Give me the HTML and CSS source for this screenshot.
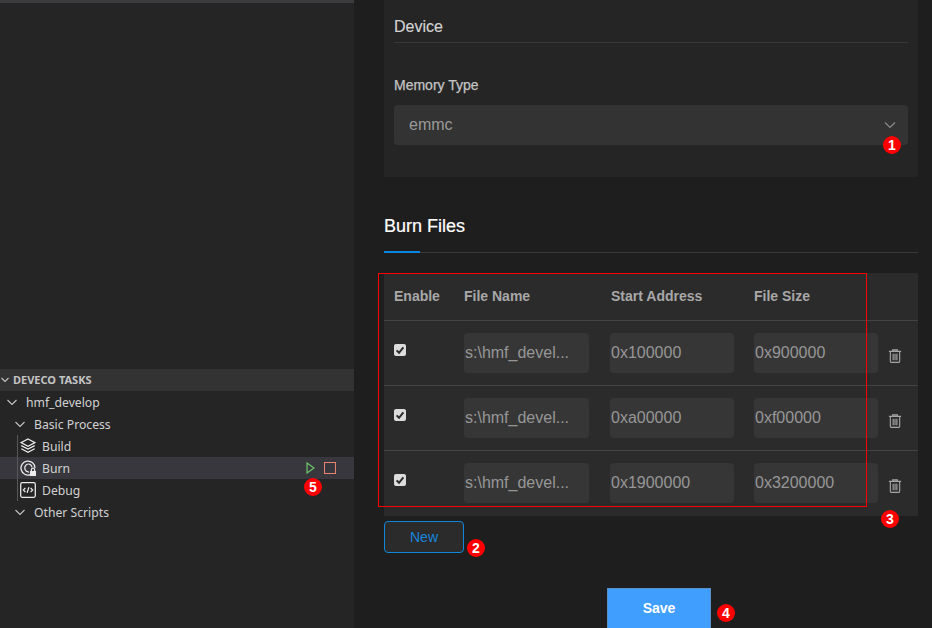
FILE: index.html
```html
<!DOCTYPE html>
<html lang="en">
<head>
<meta charset="utf-8">
<title>DevEco Burn</title>
<link rel="stylesheet" href="styles.css">
</head>
<body>
<div class="app">
  <aside class="sidebar">
    <div class="top-strip"></div>
    <div class="side-space"></div>
    <div class="tasks-head">
      <svg class="chev" viewBox="0 0 10 10"><path d="M1.5 3l3.5 3.5L8.5 3"/></svg>
      <span>DEVECO TASKS</span>
    </div>
    <div class="tree">
      <div class="row lvl1"><svg class="chev" viewBox="0 0 10 10"><path d="M.5 3L5 7.5 9.5 3"/></svg><span>hmf_develop</span></div>
      <div class="row lvl2"><svg class="chev" viewBox="0 0 10 10"><path d="M.5 3L5 7.5 9.5 3"/></svg><span>Basic Process</span></div>
      <div class="guide-group">
        <div class="row leaf">
          <svg class="ico" viewBox="0 0 16 16"><path d="M8 1L15 4.6 8 8.2 1 4.6z"/><path d="M1.3 7.6L8 11l6.7-3.4"/><path d="M1.3 10.8L8 14.4l6.7-3.6"/></svg><span>Build</span>
        </div>
        <div class="row leaf active">
          <svg class="ico" viewBox="0 0 16 16"><path d="M10.5 14.6A7 7 0 1 1 15 8"/><path d="M8.5 4a4 4 0 1 0 .6 8"/><path d="M8.5 4A4 4 0 0 1 12 7.2"/><rect class="solid" x="10" y="11" width="6" height="5"/><path d="M11.4 11V9.8a1.6 1.6 0 0 1 3.2 0V11"/></svg><span>Burn</span>
          <div class="row-actions">
            <svg class="play" viewBox="0 0 10 14"><path d="M1 1.2L9 7l-8 5.8z"/></svg>
            <span class="stop"></span>
          </div>
          <span class="badge b5">5</span>
        </div>
        <div class="row leaf">
          <svg class="ico" viewBox="0 0 16 16"><rect x=".7" y=".7" width="14.6" height="14.6" rx="1.5"/><path d="M5.4 5.8L3.4 8l2 2.2M10.6 5.8l2 2.2-2 2.2M8.9 5.2L7.1 10.8"/></svg><span>Debug</span>
        </div>
      </div>
      <div class="row lvl2"><svg class="chev" viewBox="0 0 10 10"><path d="M.5 3L5 7.5 9.5 3"/></svg><span>Other Scripts</span></div>
    </div>
  </aside>

  <main class="main">
    <section class="device-card">
      <h2 class="device-title">Device</h2>
      <label class="field-label">Memory Type</label>
      <div class="select">
        <span>emmc</span>
        <svg class="select-chev" viewBox="0 0 12 8"><path d="M1 1.5l5 5 5-5"/></svg>
        <span class="badge b1">1</span>
      </div>
    </section>

    <div class="tabs"><div class="tab">Burn Files</div></div>

    <section class="files">
      <div class="grid head">
        <div>Enable</div><div>File Name</div><div class="th-shift">Start Address</div><div>File Size</div><div></div>
      </div>
      <div class="grid line">
        <div><span class="check"><svg viewBox="0 0 12 12"><path d="M2.6 6.4l2.4 2.4 4.4-5.4"/></svg></span></div>
        <div class="cell">s:\hmf_devel...</div><div class="cell">0x100000</div><div class="cell">0x900000</div>
        <div class="trash-cell"><svg class="trash" viewBox="0 0 14 15"><path d="M.5 2.5h13M4.5 2.5V1h5v1.5M2 2.5v10.7c0 .6.4 1.1 1 1.1h8c.6 0 1-.5 1-1.1V2.5M5 5v7M7 5v7M9 5v7"/></svg></div>
      </div>
      <div class="grid line">
        <div><span class="check"><svg viewBox="0 0 12 12"><path d="M2.6 6.4l2.4 2.4 4.4-5.4"/></svg></span></div>
        <div class="cell">s:\hmf_devel...</div><div class="cell">0xa00000</div><div class="cell">0xf00000</div>
        <div class="trash-cell"><svg class="trash" viewBox="0 0 14 15"><path d="M.5 2.5h13M4.5 2.5V1h5v1.5M2 2.5v10.7c0 .6.4 1.1 1 1.1h8c.6 0 1-.5 1-1.1V2.5M5 5v7M7 5v7M9 5v7"/></svg></div>
      </div>
      <div class="grid line line-last">
        <div><span class="check"><svg viewBox="0 0 12 12"><path d="M2.6 6.4l2.4 2.4 4.4-5.4"/></svg></span></div>
        <div class="cell">s:\hmf_devel...</div><div class="cell">0x1900000</div><div class="cell">0x3200000</div>
        <div class="trash-cell"><svg class="trash" viewBox="0 0 14 15"><path d="M.5 2.5h13M4.5 2.5V1h5v1.5M2 2.5v10.7c0 .6.4 1.1 1 1.1h8c.6 0 1-.5 1-1.1V2.5M5 5v7M7 5v7M9 5v7"/></svg></div>
      </div>
      <div class="red-frame"></div>
      <span class="badge b3">3</span>
    </section>

    <div class="new-wrap">
      <button class="btn-new">New</button>
      <span class="badge b2">2</span>
    </div>
    <div class="save-wrap">
      <button class="btn-save">Save</button>
      <span class="badge b4">4</span>
    </div>
  </main>
</div>
</body>
</html>
```

FILE: styles.css
```css
* { box-sizing: border-box; }
html, body { margin: 0; height: 628px; overflow: hidden; background: #1e1e1e; }
.app { display: flex; height: 628px; font-family: "Liberation Sans", Arial, sans-serif; }

/* sidebar */
.sidebar { width: 354px; flex: none; background: #252526; display: flex; flex-direction: column; color: #d2d2d2; font-family: "Noto Sans", sans-serif; font-size: 12.2px; }
.top-strip { height: 3px; background: #3c3c3f; }
.side-space { height: 366px; }
.tasks-head { height: 22px; background: #333334; display: flex; align-items: center; font-size: 11px; font-weight: 700; }
.tasks-head .chev { width: 10px; height: 10px; margin-right: 3px; }
.tasks-head span { color: #c4c4c4; padding-bottom: 2px; }
.chev { width: 10px; height: 10px; flex: none; fill: none; stroke: #c5c5c5; stroke-width: 1.1; }
.row { height: 22px; display: flex; align-items: center; position: relative; }
.lvl1 { padding-left: 7px; gap: 9px; }
.lvl2 { padding-left: 15px; gap: 9px; }
.guide-group { border-left: 1px solid #585858; margin-left: 17px; }
.leaf { padding-left: 3px; gap: 6px; margin-left: -1px; }
.leaf.active { background: #37373d; margin-left: -18px; padding-left: 20px; }
.leaf.active::before { content: ""; position: absolute; left: 17px; top: 0; bottom: 0; width: 1px; background: #585858; }
.ico { width: 16px; height: 16px; flex: none; fill: none; stroke: #ececec; stroke-width: 1.25; }
.ico .solid { fill: #ececec; stroke: none; }
.row-actions { position: absolute; left: 306px; top: 5px; display: flex; gap: 9px; align-items: center; }
.play { width: 9px; height: 12px; fill: none; stroke: #6cbf6c; stroke-width: 1.5; }
.stop { width: 12px; height: 12px; border: 1px solid #e8836f; display: block; }

/* main */
.main { flex: 1; padding-left: 30px; padding-right: 14px; position: relative; }
.device-card { height: 177px; background: #252525; padding: 0 10px; }
.device-title { margin: 0; height: 43px; line-height: 53px; font-size: 16px; font-weight: 400; color: #d4d4d4; border-bottom: 1px solid #383838; -webkit-text-stroke: 0.15px #d4d4d4; }
.field-label { display: block; margin-top: 33px; height: 18px; line-height: 18px; font-size: 14px; color: #c4c4c4; -webkit-text-stroke: 0.25px #c4c4c4; }
.select { margin-top: 11px; height: 40px; background: #333333; border-radius: 4px; display: flex; align-items: center; justify-content: space-between; padding: 0 12px 0 15px; font-size: 16px; color: #9a9a9a; position: relative; }
.select-chev { width: 12px; height: 8px; fill: none; stroke: #8a8a8a; stroke-width: 1.2; }

.tabs { margin-top: 33px; height: 43px; border-bottom: 1px solid #3a3a3a; }
.tab { width: 81px; height: 43px; font-size: 18px; line-height: 32px; color: #ffffff; position: relative; white-space: nowrap; -webkit-text-stroke: 0.2px #ffffff; }
.tab::after { content: ""; position: absolute; left: 0; bottom: 0; width: 36px; height: 2px; background: #0a84e0; }

.files { margin-top: 20px; background: #2b2b2b; position: relative; height: 243px; }
.grid { display: grid; grid-template-columns: 70px 146px 144px 134px 1fr; padding-left: 10px; }
.head { height: 48px; padding-bottom: 2px; align-items: center; font-size: 14px; font-weight: 700; color: #a8a8a8; border-bottom: 1px solid #444444; }
.th-shift { padding-left: 1px; }
.line { height: 65px; align-items: center; border-bottom: 1px solid #444444; }
.line-last { border-bottom: 1px solid transparent; }
.check { display: block; width: 12px; height: 12px; background: #dcdcdc; border-radius: 2px; margin-top: -6px; }
.check svg { display: block; width: 12px; height: 12px; fill: none; stroke: #2b2b2b; stroke-width: 2; }
.cell { width: 124px; height: 40px; margin-top: -1px; background: #363636; border-radius: 4px; line-height: 39px; padding-left: 1px; font-size: 16px; color: #969696; white-space: nowrap; overflow: hidden; }
.line .cell:nth-child(2) { width: 125px; }
.trash-cell { display: flex; padding-top: 5px; }
.trash { width: 14px; height: 14px; fill: none; stroke: #a6a6a6; stroke-width: 1.2; }

.red-frame { position: absolute; left: -6px; top: 0; width: 489px; height: 234px; border: 1px solid #ff0000; pointer-events: none; }

.new-wrap { margin-top: 5px; position: relative; }
.btn-new { display: block; width: 80px; height: 32px; background: #2b2b2b; border: 1px solid #0f86d8; border-radius: 4px; color: #1786dc; font: 14px "Liberation Sans", Arial, sans-serif; padding: 0; }
.save-wrap { margin-top: 35px; margin-left: 223px; position: relative; }
.btn-save { display: block; width: 104px; height: 40px; padding: 0 0 2px; background: #409eff; border: 1px solid #5a90c8; border-width: 1px 1px 0 1px; color: #ffffff; font: 700 14px "Liberation Sans", Arial, sans-serif; }

/* numbered markers */
.badge { position: absolute; width: 18px; height: 18px; border-radius: 50%; background: #ff0000; color: #ffffff; font: 700 14px/18px "Liberation Sans", Arial, sans-serif; text-align: center; }
.b1 { left: 489px; top: 31px; }
.b2 { left: 83px; top: 18px; }
.b3 { left: 497px; top: 237px; }
.b4 { left: 110px; top: 16px; }
.b5 { left: 304px; top: 21px; }
```
